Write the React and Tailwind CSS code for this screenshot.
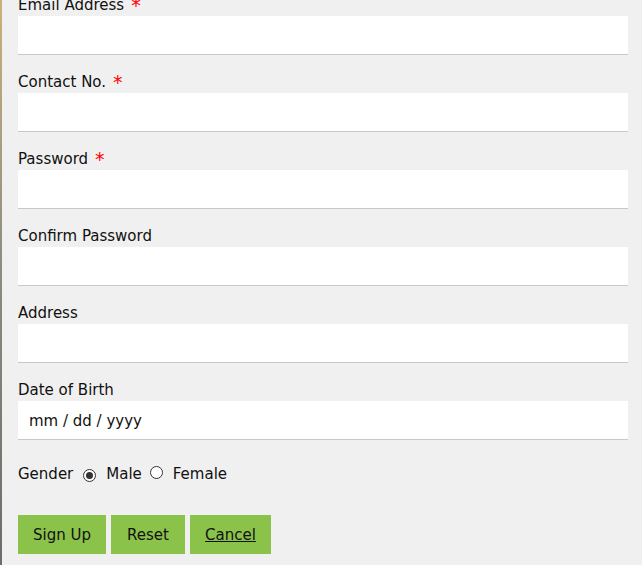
import React from "react";

const fields = [
  { label: "Email Address", required: true, type: "email" },
  { label: "Contact No.", required: true, type: "text" },
  { label: "Password", required: true, type: "password" },
  { label: "Confirm Password", required: false, type: "password" },
  { label: "Address", required: false, type: "text" },
];

function Field({ label, required, children }) {
  return (
    <div className="mb-[15px]">
      <div className="flex h-[23px] items-start pt-[2px] leading-[21px]">
        {label}
        {required && (
          <span className="ml-[7px] text-[19px] leading-[21px] text-[#ff0000]">*</span>
        )}
      </div>
      {children}
    </div>
  );
}

function Radio({ checked }) {
  return (
    <span className="inline-flex h-[13px] w-[13px] items-center justify-center rounded-full border border-[#333] bg-white">
      {checked && <span className="h-[7px] w-[7px] rounded-full bg-[#333]" />}
    </span>
  );
}

export default function App() {
  return (
    <div
      className="flex min-h-[565px] overflow-hidden bg-[#f0f0f0] text-[15px] text-[#111]"
      style={{ fontFamily: '"DejaVu Sans", Verdana, sans-serif' }}
    >
      <div className="w-[2px] shrink-0 bg-gradient-to-b from-[#c9b27a] via-[#8a8a80] to-[#6b6e68]" />
      <form className="-mt-[7px] flex-1 pl-4 pr-[14px]" onSubmit={(e) => e.preventDefault()}>
        {fields.map((f) => (
          <Field key={f.label} label={f.label} required={f.required}>
            <input
              type={f.type}
              className="block h-[39px] w-full border-b border-[#c8c8c8] bg-white px-[10px] outline-none"
            />
          </Field>
        ))}
        <Field label="Date of Birth">
          <div className="flex h-[39px] w-full items-center border-b border-[#c8c8c8] bg-white pl-[11px] pt-[2px]">
            mm / dd / yyyy
          </div>
        </Field>
        <div className="flex h-[36px] items-center pt-[2px]">
          <span>Gender</span>
          <span className="ml-[10px]"><Radio checked /></span>
          <span className="ml-[10px]">Male</span>
          <span className="ml-[8px]"><Radio /></span>
          <span className="ml-[10px]">Female</span>
        </div>
        <div className="mt-[24px] flex gap-[5px]">
          <button className="h-[39px] w-[88px] bg-[#8bc34a] pt-[2px] text-[#111]">Sign Up</button>
          <button className="h-[39px] w-[74px] bg-[#8bc34a] pt-[2px] text-[#111]">Reset</button>
          <a className="flex h-[39px] w-[81px] cursor-pointer items-center justify-center bg-[#8bc34a] pt-[2px] text-[#111] underline">
            Cancel
          </a>
        </div>
      </form>
    </div>
  );
}
